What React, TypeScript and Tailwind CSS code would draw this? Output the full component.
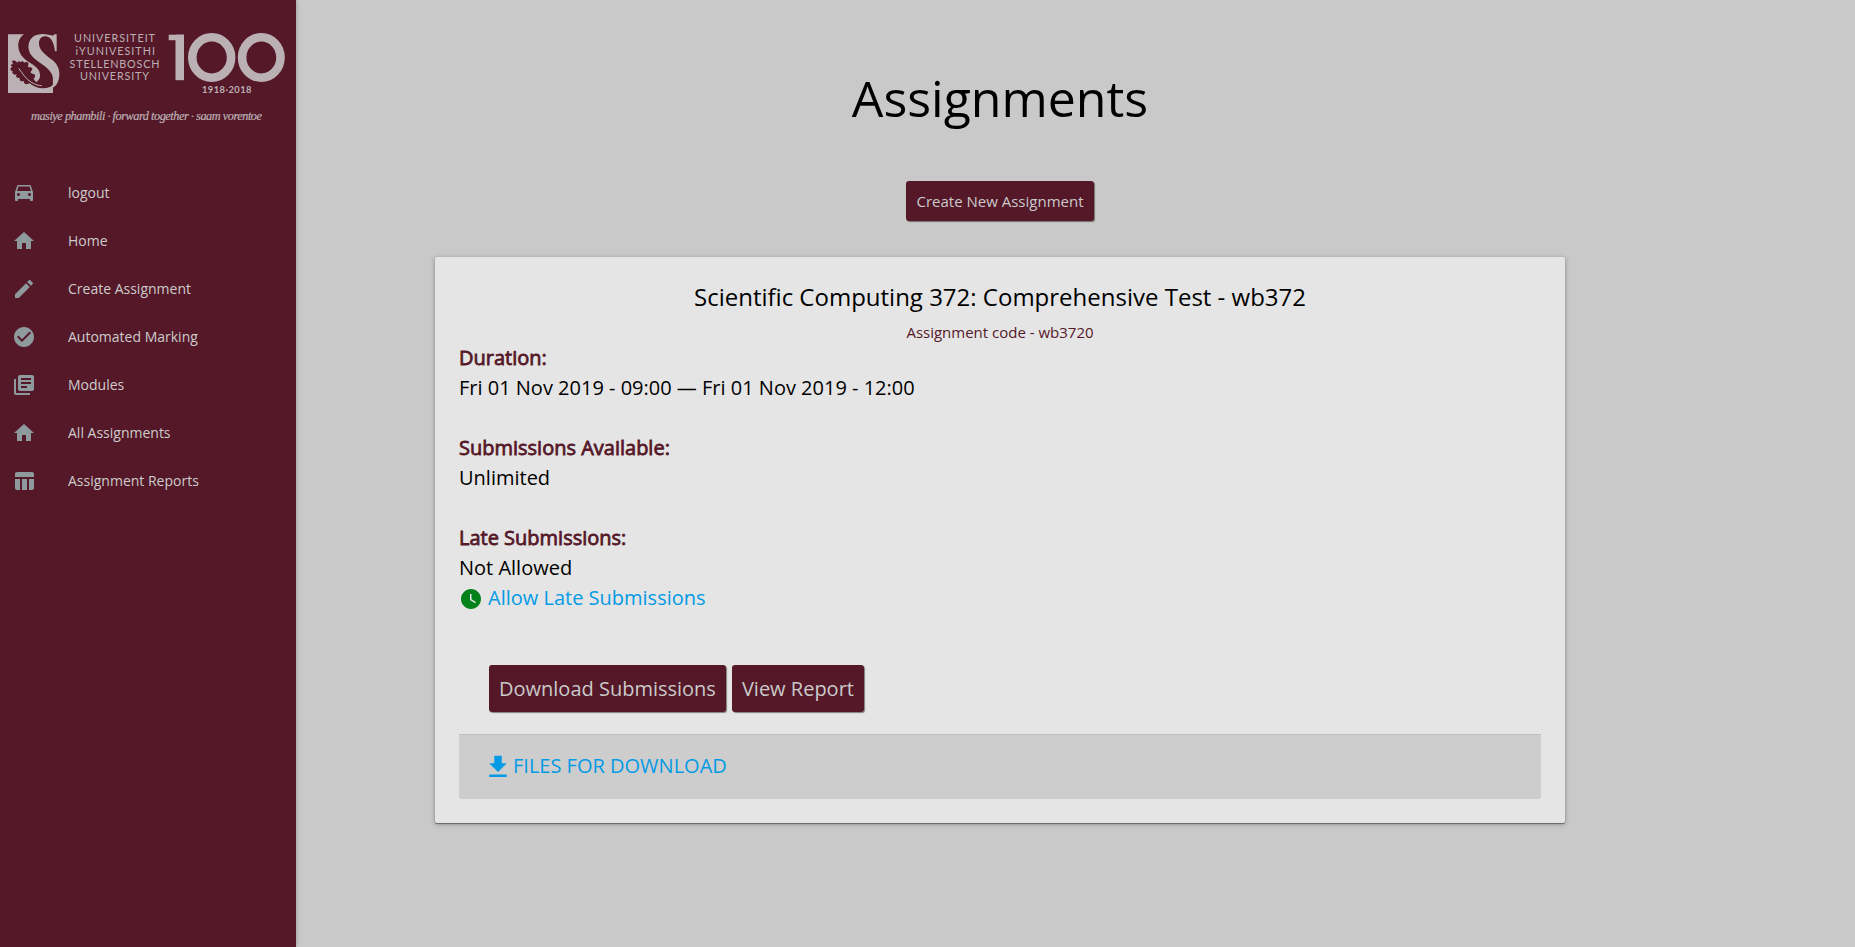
import React from "react";
import { MdWatchLater } from "react-icons/md";

const nav = [
  { label: "logout", icon: "car" },
  { label: "Home", icon: "home" },
  { label: "Create Assignment", icon: "edit" },
  { label: "Automated Marking", icon: "check" },
  { label: "Modules", icon: "books" },
  { label: "All Assignments", icon: "home" },
  { label: "Assignment Reports", icon: "table" },
];

const paths: Record<string, string> = {
  car: "M18.92 5.01C18.72 4.42 18.16 4 17.5 4h-11c-.66 0-1.21.42-1.42 1.01L3 11v8c0 .55.45 1 1 1h1c.55 0 1-.45 1-1v-1h12v1c0 .55.45 1 1 1h1c.55 0 1-.45 1-1v-8l-2.08-5.99zM6.5 15c-.83 0-1.5-.67-1.5-1.5S5.67 12 6.5 12s1.5.67 1.5 1.5S7.33 15 6.5 15zm11 0c-.83 0-1.5-.67-1.5-1.5s.67-1.5 1.5-1.5 1.5.67 1.5 1.5-.67 1.5-1.5 1.5zM5 10l1.5-4.5h11L19 10H5z",
  home: "M10 20v-6h4v6h5v-8h3L12 3 2 12h3v8z",
  edit: "M3 17.25V21h3.75L17.81 9.94l-3.75-3.75L3 17.25zM20.71 7.04c.39-.39.39-1.02 0-1.41l-2.34-2.34c-.39-.39-1.02-.39-1.41 0l-1.83 1.83 3.75 3.75 1.83-1.83z",
  check: "M12 2C6.48 2 2 6.48 2 12s4.48 10 10 10 10-4.48 10-10S17.52 2 12 2zm-2 15l-5-5 1.41-1.41L10 14.17l7.59-7.59L19 8l-9 9z",
  books: "M4 6H2v14c0 1.1.9 2 2 2h14v-2H4V6zm16-4H8c-1.1 0-2 .9-2 2v12c0 1.1.9 2 2 2h12c1.1 0 2-.9 2-2V4c0-1.1-.9-2-2-2zm-1 9H9V9h10v2zm-4 4H9v-2h6v2zm4-8H9V5h10v2z",
  table: "M10 10.02h5V21h-5zM17 21h3c1.1 0 2-.9 2-2v-9h-5v11zm3-18H5c-1.1 0-2 .9-2 2v3h19V5c0-1.1-.9-2-2-2zM3 19c0 1.1.9 2 2 2h3V10H3v9z",
};

function Logo() {
  return (
    <svg width="296" height="130" viewBox="0 0 296 130" className="block" fill="#bbb0b4">
      {/* emblem: square, ribbon and oak leaf */}
      <g transform="translate(4 30) scale(0.33333)">
        <path d="M12 13H60C47 22 42 36 43 50C45 72 58 86 78 98C98 110 109 120 108 138C107 152 96 160 80 160C94 174 128 178 147 166V189H12Z" />
        <path d="M158 13V64H153C150 36 140 19 123 19C112 19 105 28 105 41C105 62 128 76 146 91C163 105 169 124 165 144C162 160 154 172 138 177C148 164 150 146 142 130C130 108 97 96 82 76C69 58 71 34 86 21C103 7 130 12 142 16C147 18 150 16 151 13Z" />
        <path
          fill="#551828"
          d="M24 93C32 90 37 93 40 99C41 93 46 91 50 97C52 92 58 94 60 98C67 93 76 97 73 105C70 109 73 112 78 112C86 112 87 120 81 124C78 128 82 131 88 132C96 134 94 142 89 146C92 153 99 160 110 163C122 167 138 166 147 157L146 165C134 176 112 177 96 171C88 168 82 164 77 160C68 165 57 162 60 153C53 156 44 152 48 143C40 146 33 141 38 133C30 134 22 130 26 123C17 122 17 112 26 111C18 108 20 102 27 103Z"
        />
        <path fill="none" stroke="#bbb0b4" strokeWidth="3" d="M44 115C56 130 65 148 84 158C95 164 104 167 113 167" />
      </g>
      <g fontFamily="Lato, sans-serif" fontSize="10.800">
        <text x="74" y="41.700" textLength="81">UNIVERSITEIT</text>
        <text x="75.500" y="54.700" textLength="79.500">iYUNIVESITHI</text>
        <text x="69.500" y="67.500" textLength="90">STELLENBOSCH</text>
        <text x="80" y="80.300" textLength="69">UNIVERSITY</text>
      </g>
      {/* centenary mark */}
      <rect x="168.700" y="34.700" width="15.300" height="5.500" />
      <rect x="175.500" y="34.700" width="8.500" height="45.500" />
      <g fill="none" stroke="#bbb0b4">
        <ellipse cx="211.700" cy="57.500" rx="19.400" ry="20.200" strokeWidth="8.600" />
        <ellipse cx="261.300" cy="57.500" rx="19.200" ry="20.200" strokeWidth="8.600" />
      </g>
      <text x="202" y="92.600" fontFamily="Lato, sans-serif" fontWeight="700" fontSize="9.300" textLength="49.500">1918·2018</text>
      <text x="31" y="120" fontFamily="'Liberation Serif', serif" fontStyle="italic" fontSize="12.300" stroke="#bbb0b4" strokeWidth="0.200" textLength="231">
        masiye phambili · forward together · saam vorentoe
      </text>
    </svg>
  );
}

function Button({ children, className }: { children: React.ReactNode; className: string }) {
  return (
    <button className={`rounded-[3px] bg-[#551828] text-[#cacaca] shadow-[1px_1px_1px_rgba(0,0,0,0.45)] ${className}`}>
      {children}
    </button>
  );
}

function Label({ children, className = "" }: { children: React.ReactNode; className?: string }) {
  return <p className={`text-[#551828] [-webkit-text-stroke:0.8px_#551828] ${className}`}>{children}</p>;
}

export default function App() {
  return (
    <div className="flex h-[947px] w-full overflow-hidden bg-[#c9c9c9] font-['Open_Sans',sans-serif] text-black">
      <aside className="z-10 w-[296px] shrink-0 bg-[#551828] shadow-[0_0_4px_rgba(0,0,0,0.3)]">
        <Logo />
        <nav className="mt-[39px]">
          {nav.map((n) => (
            <a key={n.label} className="flex h-12 items-center pl-3 text-[14px] leading-5 text-[#cccccc]">
              <svg className="mr-8 size-6" viewBox="0 0 24 24" fill="#8f9a9e">
                <path d={paths[n.icon]} />
              </svg>
              {n.label}
            </a>
          ))}
        </nav>
      </aside>
      <main className="flex-1 pl-[139px]">
        <div className="w-[1130px]">
          <h1 className="pt-16 text-center text-[50px] leading-[68px]">Assignments</h1>
          <div className="mt-[49px] flex justify-center">
            <Button className="h-10 px-[10px] text-[15px]">Create New Assignment</Button>
          </div>
          <section className="mt-9 h-[566px] rounded-[2px] bg-[#e5e5e5] px-6 pt-[22px] shadow-[0_1px_1px_rgba(0,0,0,0.4),0_1px_5px_rgba(0,0,0,0.3)]">
            <h2 className="text-center text-[24px] leading-[36px]">Scientific Computing 372: Comprehensive Test - wb372</h2>
            <p className="mt-[6px] -mb-px text-center text-[15px] leading-[23px] text-[#551828]">Assignment code - wb3720</p>
            <div className="text-[20px] leading-[30px]">
              <Label>Duration:</Label>
              <p>Fri 01 Nov 2019 - 09:00 — Fri 01 Nov 2019 - 12:00</p>
              <Label className="mt-[30px]">Submissions Available:</Label>
              <p>Unlimited</p>
              <Label className="mt-[30px]">Late Submissions:</Label>
              <p>Not Allowed</p>
              <a className="flex items-center text-[#039be5]">
                <MdWatchLater className="mt-[2px] mr-[5px] size-6 text-[#04821a]" />
                Allow Late Submissions
              </a>
            </div>
            <div className="mt-[52px] ml-[30px] flex gap-[6px] text-[20px] leading-[29px]">
              <Button className="h-[47px] px-[10px]">Download Submissions</Button>
              <Button className="h-[47px] px-[10px]">View Report</Button>
            </div>
            <div className="mt-[22px] flex h-[65px] items-center rounded-b-[2px] border-t border-[#bfbfbf] bg-[#cdcdcd] pl-6 text-[20px] leading-[30px] text-[#039be5]">
              <svg className="size-[30px]" viewBox="0 0 24 24" fill="currentColor">
                <path d="M19 9h-4V3H9v6H5l7 7 7-7zM5 18v2h14v-2H5z" />
              </svg>
              <span className="pb-[3px]">FILES FOR DOWNLOAD</span>
            </div>
          </section>
        </div>
      </main>
    </div>
  );
}
